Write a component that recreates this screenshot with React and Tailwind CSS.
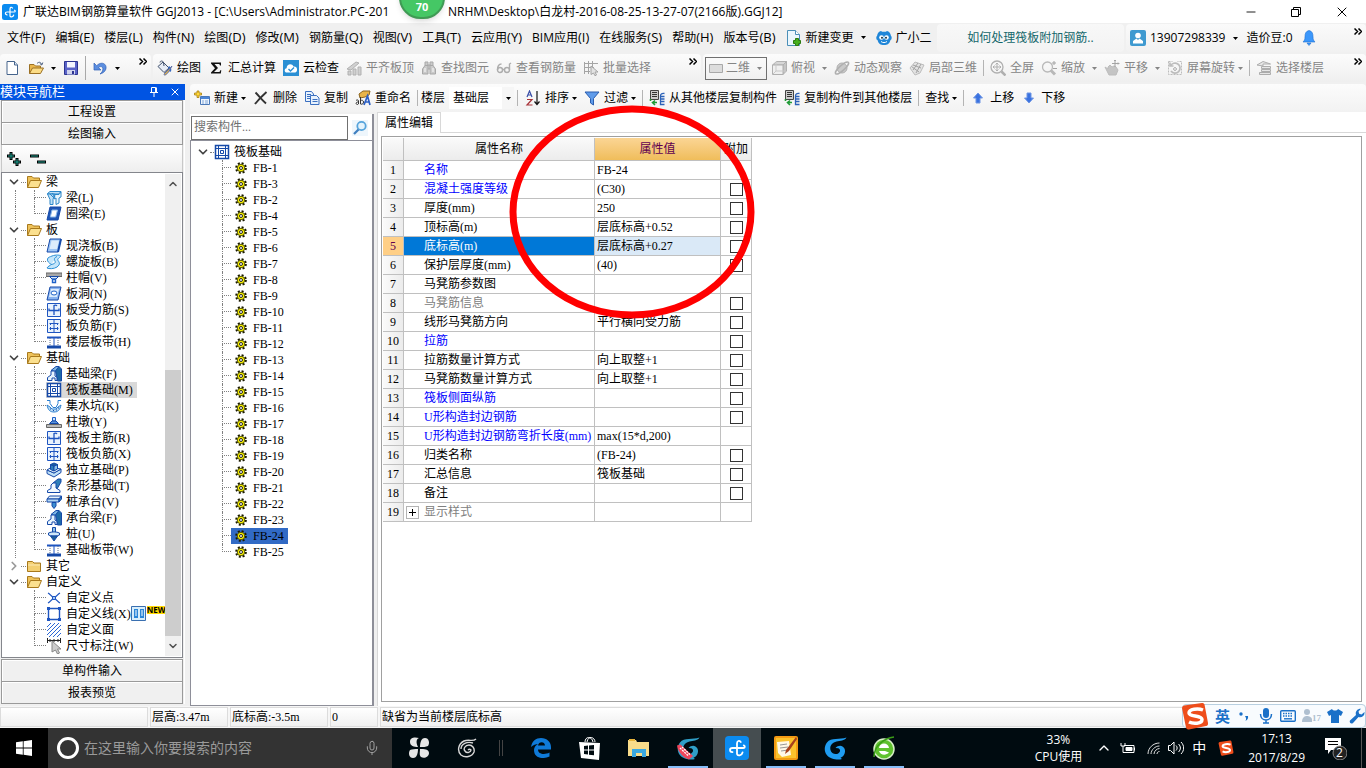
import React, { useState } from "react";
import { ChevronDown, ChevronRight, ChevronUp, Mic, Minus, X } from "lucide-react";

const MENUS = [
  ["文件", "F"],
  ["编辑", "E"],
  ["楼层", "L"],
  ["构件", "N"],
  ["绘图", "D"],
  ["修改", "M"],
  ["钢筋量", "Q"],
  ["视图", "V"],
  ["工具", "T"],
  ["云应用", "Y"],
  ["BIM应用", "I"],
  ["在线服务", "S"],
  ["帮助", "H"],
  ["版本号", "B"],
];

const NAV_TREE = [
  {
    label: "梁",
    items: [
      { label: "梁(L)", icon: "beam" },
      { label: "圈梁(E)", icon: "ring" },
    ],
  },
  {
    label: "板",
    items: [
      { label: "现浇板(B)", icon: "slab" },
      { label: "螺旋板(B)", icon: "spiral" },
      { label: "柱帽(V)", icon: "cap" },
      { label: "板洞(N)", icon: "hole" },
      { label: "板受力筋(S)", icon: "rebar" },
      { label: "板负筋(F)", icon: "negative" },
      { label: "楼层板带(H)", icon: "strip" },
    ],
  },
  {
    label: "基础",
    items: [
      { label: "基础梁(F)", icon: "foundation" },
      { label: "筏板基础(M)", icon: "raft", active: true },
      { label: "集水坑(K)", icon: "pit" },
      { label: "柱墩(Y)", icon: "pier" },
      { label: "筏板主筋(R)", icon: "rebar" },
      { label: "筏板负筋(X)", icon: "negative" },
      { label: "独立基础(P)", icon: "isolated" },
      { label: "条形基础(T)", icon: "stripBase" },
      { label: "桩承台(V)", icon: "pileCap" },
      { label: "承台梁(F)", icon: "foundation" },
      { label: "桩(U)", icon: "pile" },
      { label: "基础板带(W)", icon: "strip" },
    ],
  },
  { label: "其它", closed: true, items: [] },
  {
    label: "自定义",
    items: [
      { label: "自定义点", icon: "point" },
      { label: "自定义线(X)", icon: "line", isNew: true },
      { label: "自定义面", icon: "area" },
      { label: "尺寸标注(W)", icon: "dimension" },
    ],
  },
];

const COMPONENTS = [
  1, 3, 2, 4, 5, 6, 7, 8, 9, 10, 11, 12, 13, 14, 15, 16, 17, 18, 19, 20, 21, 22,
  23, 24, 25,
].map((n) => `FB-${n}`);

const PROPERTIES = [
  { name: "名称", value: "FB-24", tone: "blue" },
  { name: "混凝土强度等级", value: "(C30)", tone: "blue", extra: true },
  { name: "厚度(mm)", value: "250", extra: true },
  { name: "顶标高(m)", value: "层底标高+0.52", extra: true },
  { name: "底标高(m)", value: "层底标高+0.27", extra: true, active: true },
  { name: "保护层厚度(mm)", value: "(40)", extra: true },
  { name: "马凳筋参数图", value: "" },
  { name: "马凳筋信息", value: "", tone: "gray", extra: true },
  { name: "线形马凳筋方向", value: "平行横向受力筋", extra: true },
  { name: "拉筋", value: "", tone: "blue", extra: true },
  { name: "拉筋数量计算方式", value: "向上取整+1", extra: true },
  { name: "马凳筋数量计算方式", value: "向上取整+1", extra: true },
  { name: "筏板侧面纵筋", value: "", tone: "blue", extra: true },
  { name: "U形构造封边钢筋", value: "", tone: "blue", extra: true },
  { name: "U形构造封边钢筋弯折长度(mm)", value: "max(15*d,200)", tone: "blue" },
  { name: "归类名称", value: "(FB-24)", extra: true },
  { name: "汇总信息", value: "筏板基础", extra: true },
  { name: "备注", value: "", extra: true },
  { name: "显示样式", value: "", tone: "gray", group: true },
];

const TONES = {
  blue: "text-[#0000ff]",
  gray: "text-[#808080]",
};

/* ---------- icons ---------- */

const D = "#1549a8";
const L = "#bfe0f7";

const SHAPES = {
  beam: (
    <g stroke="#2a86c8" fill={L}>
      <path d="M1.5 3.5 4 1.5h11L12.5 4H1.5z" />
      <path d="M1.5 4h7L7 9.5v5H4v-5z" />
      <path d="M9 4.5h4L15 2v5l-2 1v5l-3 1.5V8L8 9z" fill="#e8f5fd" />
      <path d="M4 4l4 4M6 3l3 4" />
    </g>
  ),
  ring: (
    <g>
      <path d="M4 1h11l-3 13H1z" fill="#1f56b5" stroke={D} />
      <path d="M6 4h5.5l-1.8 7H4.3z" fill="#fff" stroke="#8ab8ea" />
    </g>
  ),
  slab: (
    <g>
      <path d="M4 1h11l-3 13H1z" fill="#9cc4f5" stroke={D} />
      <path d="M5.500 2.500H13L11 11H3.500z" fill="#dcecfc" />
      <path d="M12 14l3-13" stroke={D} strokeWidth="2" />
    </g>
  ),
  spiral: (
    <path
      d="M6 2c4-1.500 8-1 9 0-2 2-4 3-3 4.500S15 10 11 13c-3 2-8 2-10 1 1-2 3-2 4-3.500C3 8 1 8 1.500 5 2 3 4 3 6 2z M5 10.500C8 10 10 9 9 7S8 4 11 2.500"
      fill="#c5e6fa"
      stroke="#2b8fd6"
    />
  ),
  cap: (
    <g>
      <path d="M0 3h16v3.5H0z" fill="#a8a8a8" stroke="#666" />
      <path d="M3.5 6.5h9L10 9H6z" fill="#d4e7fb" stroke={D} />
      <path d="M6.5 9.500h3v3h-3z" fill="#fff" stroke="#1e62c9" strokeWidth="1.4" />
    </g>
  ),
  hole: (
    <g>
      <path d="M4 1h11l-3 13H1z" fill="#8ab4f0" stroke={D} />
      <path d="M5 3h8l-2 8H3z" fill="#dcecfc" />
      <ellipse cx="8" cy="7" rx="3" ry="2" fill="#fff" stroke="#1e62c9" />
    </g>
  ),
  rebar: (
    <g fill="none" stroke="#1e55c0">
      <path d="M1.5 1.5h13v13h-13z" fill="#eaf3fd" />
      <path d="M8 3v10M11 4c-1-1.500-3-1-3 0M3 6.500v2h10v-2" strokeWidth="1.3" />
    </g>
  ),
  negative: (
    <g fill="none" stroke="#1e55c0">
      <path d="M1.5 1.5h13v13h-13z" fill="#eaf3fd" />
      <path d="M8 2v12M3.5 5.5h9M3.5 10.5h9M4.5 5v2M11.5 5v2M4.5 9v3M11.5 9v3" />
    </g>
  ),
  strip: (
    <g fill="none" stroke="#1e55c0">
      <path d="M1 3.5h14" strokeWidth="2" />
      <path d="M1 13h14" strokeWidth="3" stroke={D} />
      <path d="M8 4v8" />
      <path d="M4 4v8M12 4v8" stroke="#5c6f90" strokeDasharray="1 1" />
    </g>
  ),
  foundation: (
    <g stroke={D}>
      <path d="M9 2l4-1.500L15.500 3v12h-4z" fill="#1e6aa8" />
      <path d="M5 4.500l5-4h3l-4 5z" fill="#7fb7e2" />
      <path d="M1.500 14.500v-3L5 9V5h4v5l2 1.500v3h-2V12H6v2.500z" fill="#e8f4fd" />
    </g>
  ),
  raft: (
    <g fill="none" stroke={D}>
      <path d="M1.5 1.5h13v13h-13z" fill="#fff" strokeWidth="1.5" />
      <path d="M1 4.5h14M1 11.5h14M4.5 1v14M11.5 1v14" />
      <path d="M6.5 6.5h3v3h-3z" />
    </g>
  ),
  pit: (
    <g fill="none" stroke="#2b7fd0">
      <path d="M1 2.5h3v3l3 4h3l2-4v-3h3" />
      <path d="M1 7c1 5 3 7 7 7s6-2 7-7l-3 2-2 2H6L4 9z" fill={L} />
      <path d="M4 11h1M7 12.5h1M10 12h1M12 10h1" stroke={D} />
    </g>
  ),
  pier: (
    <g>
      <path d="M6.5 3.5h3V7h-3z" fill="#cfe5fb" stroke="#1e62c9" />
      <path d="M3.5 9.5L6 7h4l2.5 2.5z" fill="#5a94dc" stroke={D} />
      <path d="M.5 10.5h15v3H.5z" fill="#bbb" stroke="#666" />
    </g>
  ),
  isolated: (
    <g stroke={D}>
      <path d="M1 8l7 3 7-4v3.500L8 15l-7-3.500z" fill="#bfe0f7" />
      <path d="M1 8l4-2.500 10 1.500-7 4z" fill="#eaf5fd" />
      <path d="M4.500 2.500L8 4v5L4.500 7.500z" fill="#2f7fb8" />
      <path d="M8 4l3.500-1.500V7L8 9z" fill="#8fc2e8" />
      <path d="M4.500 2.500L8 1l3.500 1.500L8 4z" fill="#1d5f9a" />
    </g>
  ),
  stripBase: (
    <g stroke={D}>
      <path d="M7 5l5-4h3v3l-4 7z" fill="#2f7fb8" />
      <path d="M1.500 14.500v-2L5 10.500V7l2-2h3v5l4 2.500v2z" fill="#f2f9fe" />
    </g>
  ),
  pileCap: (
    <g stroke={D}>
      <path d="M1 5l2.500-3h12L13 5z" fill="#e4f2fc" />
      <path d="M1 5h12v3H1z" fill="#b4d8f4" />
      <path d="M13 5l2.500-3v3L13 8z" fill="#2f7fb8" />
      <path d="M6 8.500h4V12l-2 2.500L6 12z" fill="#3d8fd0" />
    </g>
  ),
  pile: (
    <g stroke={D}>
      <path d="M6.500 1.500h3v6h-3z" fill="#8fc2e8" />
      <path d="M2.500 7c3-1.500 8-1.500 11 0v2c-2 1.500-9 1.500-11 0z" fill="#cfe8fa" />
      <path d="M4.500 10h7L8 15z" fill="#1d5f9a" />
    </g>
  ),
  point: (
    <g stroke="#1e55c0" fill="none">
      <path d="M2 3c2 1 3 3 6 5s4 4 6 5M14 3c-2 1-3 3-6 5s-4 4-6 5" strokeWidth="1.3" />
      <path d="M6.500 6.500h3v3h-3z" fill="#9cc4f5" />
    </g>
  ),
  line: (
    <g>
      <path d="M2.500 2.500h11v11h-11z" fill="none" stroke="#1e55c0" strokeWidth="1.4" />
      <path d="M1 1h3v3H1zM12 1h3v3h-3zM1 12h3v3H1zM12 12h3v3h-3z" fill="#1e55c0" />
    </g>
  ),
  area: (
    <path
      d="M1 5l4-4M1 9l8-8M1 13l12-12M3 15L15 3M7 15l8-8M11 15l4-4"
      stroke="#2a66d4"
      fill="none"
    />
  ),
  dimension: (
    <g>
      <path d="M1.500 0v5M14.500 0v5M2 2.500h12M4 1v3M8 1v3M12 1v3" stroke="#222" fill="none" />
      <path d="M6 3l9 8h-3.500l2 4-2 1-2-4L6 14z" fill="#ccc" stroke="#888" />
    </g>
  ),
  folder: (
    <g stroke="#a8791c">
      <path d="M1.500 3.500h5L8 5h6.500v8.500h-13z" fill="#f3cf72" />
      <path d="M2 7h12" stroke="#fbe9b4" />
    </g>
  ),
  folderOpen: (
    <g stroke="#a8791c">
      <path d="M1.500 13.500v-11H6L7.500 4h6v3" fill="#eec25a" />
      <path d="M1.500 13.500L4.500 6.500h11l-3 7z" fill="#fbe08f" />
    </g>
  ),
  gear: (
    <g>
      <circle cx="8" cy="8" r="6.3" fill="none" stroke="#1a1a00" strokeWidth="3" strokeDasharray="2.6 2.35" />
      <circle cx="8" cy="8" r="5" fill="#f8f000" stroke="#4a4a00" strokeWidth="1.2" />
      <circle cx="8" cy="8" r="2" fill="#fff" stroke="#222" strokeWidth="1.3" />
    </g>
  ),
  newFile: (
    <g stroke="#46648c">
      <path d="M3 1.500h7.500L13.500 5v9.500H3z" fill="#fff" />
      <path d="M10.500 1.500V5h3" fill="#dbe8f7" />
    </g>
  ),
  openFile: (
    <g>
      <path d="M1.500 13.500v-9H6L7.500 6h5v2" fill="#e9b64c" stroke="#9b7024" />
      <path d="M1.500 13.500L4.500 8h11l-3 5.500z" fill="#fbdc86" stroke="#9b7024" />
      <path d="M9 3.500c2-2 4-1.500 4.500 1M14.800 2.500l-1 2.500-2-1.500" fill="none" stroke="#4a5f80" />
    </g>
  ),
  save: (
    <g>
      <path d="M1.500 1.500h13v13h-13z" fill="#5a63c8" stroke="#2c3490" />
      <path d="M4 2h8v5.500H4z" fill="#f4f6ff" />
      <path d="M4 10h8v4.500H4z" fill="#d0d4ee" />
      <path d="M9 11h2v3H9z" fill="#2c3490" />
    </g>
  ),
  undo: (
    <path
      d="M2 3v7h7L6.500 7.600C9 5.500 11.500 7 10.800 10c-.3 1.500-1.300 2.800-2.800 4 4-1 6.500-4 6-7.300C13.300 2.500 8 2 4.700 5.700z"
      fill="#5b8ee0"
      stroke="#2f5fb4"
      strokeWidth=".7"
    />
  ),
  paint: (
    <g>
      <path d="M6 2l6 6-5 4.500-6-6z" fill="#e6ecf5" stroke="#40506c" />
      <path d="M3 2.500c0-2 3-2 3.500 0L7 6" fill="none" stroke="#40506c" />
      <path d="M11.500 7c2 1 2 3 1.500 4.500" fill="none" stroke="#3568c0" strokeWidth="2" />
      <path d="M15 6l-3.500 6-3 3c-1 .6-2-.5-1-1.500z" fill="#e5b342" stroke="#5b6ea8" />
    </g>
  ),
  sigma: (
    <path d="M3 2.500h10v3h-1l-.7-1.500H6.500L10 8l-4 4h5.500l.8-1.700h1l-.5 3.200H3v-1L7 8.300 3 3.500z" fill="#111" />
  ),
  cloudCheck: (
    <g>
      <path d="M0 0h16v16H0z" fill="#2a8fd4" />
      <path d="M4 12.500c-3 0-3-4-.4-4.300C3.600 4 9 3 10.500 6.500 15 6 15 12 12 12.500z" fill="#fff" />
      <path d="M5.500 9l2 2 3.500-3.500" fill="none" stroke="#2a8fd4" strokeWidth="1.4" />
    </g>
  ),
  align: (
    <g fill="#c4c4c4" stroke="#9a9a9a">
      <path d="M1 9l9-7 3 1-8 7z" />
      <path d="M2 11h3v4H2zM7 9h3v6H7zM12 7h3v8h-3z" />
    </g>
  ),
  binoculars: (
    <g fill="#bdbdbd" stroke="#8f8f8f">
      <path d="M4 2h3v4H4zM9 2h3v4H9zM6.500 5h3v4h-3z" />
      <path d="M1.500 14V9L4 5.500h3V14zM14.500 14V9L12 5.500H9V14z" />
      <path d="M4 8v4M12 8v4" stroke="#fff" />
    </g>
  ),
  glasses: (
    <g fill="none" stroke="#959595" strokeWidth="1.4">
      <circle cx="4" cy="10" r="2.500" />
      <circle cx="11" cy="10" r="2.500" />
      <path d="M6.500 9.500h2M1.500 10c0-4 1-6 4-6M13.500 10V4l1.500-1" />
    </g>
  ),
  batch: (
    <g stroke="#8a8a8a" fill="none">
      <path d="M1.500 2v12M5.500 1v13M9.500 1v8M1 3.500h14M1 7.500h10M1 11.500h6" />
      <path d="M8 6l7 6h-3l1.500 3-1.500.8L10.500 13 8 14.500z" fill="#ddd" />
    </g>
  ),
  plane2d: <path d="M1.500 4.500h13v8h-13z" fill="#dcdcdc" stroke="#a8a8a8" />,
  cube: (
    <g stroke="#999">
      <path d="M1.500 5l4-3.500h10L12 5z" fill="#ccc" />
      <path d="M12 5l3.500-3.500V11L12 14.500z" fill="#b5b5b5" />
      <path d="M1.500 5H12v9.500H1.500z" fill="#eee" />
      <path d="M5 2v9l-3 3M5 11h10" fill="none" stroke="#bbb" />
    </g>
  ),
  planet: (
    <g stroke="#999">
      <circle cx="8" cy="8" r="5" fill="#bcbcbc" />
      <ellipse cx="8" cy="8" rx="8.500" ry="2.500" transform="rotate(-42 8 8)" fill="none" strokeWidth="1.5" />
    </g>
  ),
  local3d: (
    <g stroke="#aaa" fill="#ddd">
      <path d="M1 8l5-6 9 3-4 8-5 2z" />
      <path d="M4 5l8 3M2.500 6.500L10 12M9 3L4 10M12 4L7 13" fill="none" stroke="#888" />
    </g>
  ),
  fit: (
    <g fill="none" stroke="#999">
      <circle cx="7" cy="7" r="6" strokeWidth="1.3" />
      <path d="M7 3v8M3 7h8M5.500 4.500L7 3l1.500 1.500M5.500 9.500L7 11l1.500-1.500M4.500 5.500L3 7l1.500 1.500M9.500 5.500L11 7 9.500 8.500" />
      <path d="M11.500 11.500l4 4" strokeWidth="2.5" />
    </g>
  ),
  zoom: (
    <g fill="none" stroke="#a5a5a5">
      <circle cx="6.500" cy="7" r="5" strokeWidth="1.3" />
      <path d="M10 10.500l4 4" strokeWidth="3" />
      <path d="M13 1v4M11 3h4M12 8.500h4" stroke="#888" />
    </g>
  ),
  pan: (
    <g stroke="#aaa">
      <path d="M1 7l3 2V7l2-2 2 2 2-1 2 1 2 3-2 5H5z" fill="#b5b5b5" />
      <path d="M11 0v7M8 3.500h7M10 1l1-1 1 1M14 2.500l1 1-1 1" fill="none" stroke="#888" />
    </g>
  ),
  rotate: (
    <g fill="none" stroke="#aaa">
      <path d="M1.500 1.500h4M1.500 1.500v13h13v-13h-4" strokeDasharray="2 1" />
      <path d="M4 11a5 5 0 1 0-.5-5M3 2.500V6h3.500" strokeWidth="1.7" />
      <path d="M6 9l2-2 2 2-2 2z" fill="#ccc" />
    </g>
  ),
  floors: (
    <g fill="#e2e2e2" stroke="#959595">
      <path d="M1 5l6-3.500L14.500 4H7v2z" />
      <path d="M5.500 6.500h9v2h-9zM5.500 9.500h9v2h-9zM3.500 12.500h11v2h-11z" />
    </g>
  ),
  addNew: (
    <g>
      <path d="M6.500 6.500h9v8h-9z" fill="#eef5fd" stroke="#4a78b8" />
      <path d="M7 7h8v2H7z" fill="#4b86d8" />
      <path d="M8 11h2M11 11h3M8 13h2M11 13h3" stroke="#7fa5d8" />
      <path d="M3 1h2v2h2.500v2H5v2.500H3V5H.5V3H3z" fill="#ffd83a" stroke="#a87d10" strokeWidth=".8" />
    </g>
  ),
  remove: <path d="M2.500 2.500C6 6 9 10 13 13.500M13.500 2C9 6 6 9 2 14" stroke="#333" strokeWidth="1.9" fill="none" />,
  copy: (
    <g fill="#e8f2fd" stroke="#3a6fc0">
      <path d="M1.500 1.500h6L9.500 4v7.500h-8z" />
      <path d="M3 4.500h4M3 6.500h4M3 8.500h3" />
      <path d="M6.500 5.500h6L15 8v6.500H6.500z" />
      <path d="M8.500 9.500h5M8.500 11.500h5" />
    </g>
  ),
  rename: (
    <g>
      <path d="M4 4l4-3h7l-1 4-4 2-5 1z" fill="#e8b44a" stroke="#8a6420" />
      <path d="M1 10.500c1-1 2.500-.7 2.500.5v3M3.500 12c-3-.3-3 2.500-1 2.500l1-.7M5.500 7v7c2 .8 3-.5 3-2s-1.500-2.300-3-1.300" fill="none" stroke="#333" />
      <path d="M9 15l3.500-9L15 15M10 12h4" fill="none" stroke="#2b5fc4" strokeWidth="1.7" />
    </g>
  ),
  sort: (
    <g fill="none">
      <path d="M2 7l2.500-6L7 7M3 5h3" stroke="#3a4fa8" strokeWidth="1.2" />
      <path d="M2 9.500h5L2 15h5.500" stroke="#a83238" strokeWidth="1.2" />
      <path d="M12 1v13M9.500 11.500L12 14.500l2.500-3" stroke="#111" strokeWidth="1.2" />
    </g>
  ),
  filter: <path d="M1 2h14L9.500 8.500V15l-3-2V8.500z" fill="#5f9bea" stroke="#2a5cae" />,
  copyFloor: (
    <g>
      <path d="M1.500.5h8v9h-8z" fill="#ccc" stroke="#444" />
      <path d="M3 2.500h5M3 4.500h5M3 6.500h5" stroke="#333" />
      <path d="M1.500 9v2M4 12.500h4M6 10.500L3.500 12.500 6 15" stroke="#1f9a35" strokeWidth="1.6" fill="none" />
      <path d="M15.500 3.500c-3-.5-4 .8-4 2.500v8.500h4M12 6.500h3.500M12 9h3.500M12 11.500h3.500" stroke="#2c62b8" fill="none" strokeWidth="1.3" />
    </g>
  ),
  up: <path d="M8 3l4.500 5H10v5H6V8H3.500z" fill="#3a72e0" stroke="#6f96e4" />,
  down: <path d="M8 13L3.500 8H6V3h4v5h2.500z" fill="#3a72e0" stroke="#6f96e4" />,
  changeDoc: (
    <g>
      <path d="M1.500.5h8l4 4v11h-12z" fill="#eaf6fd" stroke="#4a8fb8" />
      <path d="M9.500.5v4h4" fill="#fff" stroke="#4a8fb8" />
      <path d="M9.500 8.500h3v2h2v3h-2v2h-3v-2h-2v-3h2z" fill="#46b01e" stroke="#2b7a10" />
    </g>
  ),
  mascot: (
    <g>
      <path d="M1 6c-1 0-1 4 .5 4 1 4 3 5 6.500 5s5.500-1 6.500-5C16 10 16 6 15 6c-.5-3-2-4.500-4-5-1 .8-2 1-3 .8C7 2 6 1.800 5 1 3 1.500 1.500 3 1 6z" fill="#1f86d8" />
      <circle cx="5.500" cy="7.500" r="2.300" fill="#fff" />
      <circle cx="10.500" cy="7.500" r="2.300" fill="#fff" />
      <circle cx="6" cy="7.700" r="1" fill="#134" />
      <circle cx="10" cy="7.700" r="1" fill="#134" />
      <path d="M5 11.500c2 1.500 4 1.500 6 0" fill="none" stroke="#fff" />
    </g>
  ),
  user: (
    <g>
      <rect width="16" height="16" rx="2" fill="#3f9ad0" />
      <circle cx="8" cy="5.500" r="2.800" fill="#fff" />
      <path d="M3 13.500V11l3.500-2.500L8 10l1.500-1.500L13 11v2.500z" fill="#fff" />
    </g>
  ),
  bell: (
    <g fill="#3b97fb" stroke="#1f6ed0" strokeWidth=".6">
      <path d="M8 .5c-3 .5-4 3-4 6 0 3-.5 4-2 5.500h12c-1.500-1.500-2-2.500-2-5.500 0-3-1-5.500-4-6z" />
      <path d="M6 13h4l-2 2.500z" />
    </g>
  ),
  find: (
    <g fill="none">
      <circle cx="9.500" cy="6" r="4.200" stroke="#56a4dc" strokeWidth="1.8" fill="#e4f3fc" />
      <path d="M6.500 9.500L2 14" stroke="#3f7fc0" strokeWidth="2.3" />
    </g>
  ),
  newTag: (
    <g>
      <path d="M.5.500h14v14H.5z" fill="#d8eefb" stroke="#3a6fb0" />
      <path d="M3 3h4v9H3zM9 3h4v9H9z" fill="#2a86d8" />
      <path d="M4 5h2M4 7h2M4 9h2M10 5h2M10 7h2M10 9h2" stroke="#fff" />
    </g>
  ),
};

function Icon({ name, className = "size-4" }) {
  return (
    <svg viewBox="0 0 16 16" className={`shrink-0 ${className}`} aria-hidden="true">
      {SHAPES[name]}
    </svg>
  );
}

// small triangle used by every drop-down
function Caret({ className = "" }) {
  return (
    <svg viewBox="0 0 5 3" className={`h-[3px] w-[5px] shrink-0 fill-current ${className}`} aria-hidden="true">
      <path d="M0 0h5L2.500 3z" />
    </svg>
  );
}

function GlodonMark({ className = "" }) {
  return (
    <svg viewBox="0 0 16 16" className={`shrink-0 ${className}`} aria-hidden="true">
      <rect width="16" height="16" rx="2.500" fill="#0b8bf0" />
      <path
        d="M10.500 4C9.500 2.700 8 3.200 8 5v7M8 8H5C2.800 8 2.800 10.500 5 10.800M8 8h4.200c1.300 0 1.300-1.500.3-1.800M8 12c.3 1.300 3.200 1.300 3.700-1"
        fill="none"
        stroke="#fff"
        strokeWidth="1.2"
        strokeLinecap="round"
      />
    </svg>
  );
}

function SogouMark({ className = "" }) {
  return (
    <svg viewBox="0 0 28 28" className={`shrink-0 ${className}`} aria-hidden="true">
      <path d="M1 6Q1 4 3 3.500L21 1q2-.3 2.500 1.500L27 21q.4 2.500-2 3L8 27.500q-2.500.5-3-2z" fill="#ee4d1b" />
      <path
        d="M22 8C17 6 8 7 8 11s13 2 13 6.500S12 22 8 20"
        fill="none"
        stroke="#fff"
        strokeWidth="3.5"
      />
    </svg>
  );
}

/* ---------- toolbars ---------- */

function Tool({ icon, label, caret, tight, disabled }) {
  return (
    <button
      className={`flex shrink-0 items-center gap-1 whitespace-nowrap ${
        disabled ? "text-[#858585]" : "text-black"
      }`}
    >
      {icon && <Icon name={icon} className={disabled ? "size-4 opacity-75" : "size-4"} />}
      <span className="flex items-center">
        {label}
        {caret && <Caret className={tight ? "ml-[3px]" : "ml-[7px]"} />}
      </span>
    </button>
  );
}

function Divider() {
  return <span className="-mx-px h-4 w-px shrink-0 bg-[#b4b4b4]" />;
}

function More() {
  return (
    <button aria-label="更多" className="ml-auto self-start pt-1 pr-1">
      <svg viewBox="0 0 8 7" className="h-[7px] w-2" fill="none" stroke="#000" strokeWidth="1.5">
        <path d="M.5.500l3 3-3 3M4.500.500l3 3-3 3" />
      </svg>
    </button>
  );
}

function TitleBar() {
  return (
    <header className="relative flex h-[23px] items-center bg-white text-xs">
      <GlodonMark className="ml-0.5 size-4" />
      <h1 className="ml-[5px] flex whitespace-nowrap">
        <span className="w-[380px] overflow-hidden">
          广联达BIM钢筋算量软件 GGJ2013 - [C:\Users\Administrator.PC-201
        </span>
        <span className="ml-[45px]">NRHM\Desktop\白龙村-2016-08-25-13-27-07(2166版).GGJ12]</span>
      </h1>
      <div className="absolute -top-6 left-[399px] flex h-[43px] w-[46px] items-end justify-center rounded-full border-2 border-[#3f9a54] bg-[#45c765] pb-1 text-[11px] leading-3 font-bold text-white shadow-md">
        70
      </div>
      <div className="ml-auto flex items-center gap-8 pr-4">
        <button aria-label="最小化">
          <Minus className="size-3.5" strokeWidth={1.5} />
        </button>
        <button aria-label="还原">
          <svg viewBox="0 0 12 12" className="size-3" fill="none" stroke="#000">
            <path d="M1.500 3.500h7v7h-7zM3.500 3V1.500h7v7H9" />
          </svg>
        </button>
        <button aria-label="关闭">
          <X className="size-4" strokeWidth={1.5} />
        </button>
      </div>
    </header>
  );
}

function MenuBar() {
  return (
    <nav className="flex h-[30px] items-center bg-[#f0f0f0] text-xs">
      <div className="flex shrink-0 items-center gap-2.5 pl-[7px]">
        {MENUS.map(([label, key]) => (
          <button key={label} className="whitespace-nowrap">
            {label}
            <span className="text-[13px]">({key})</span>
          </button>
        ))}
        <Tool icon="changeDoc" label="新建变更" caret />
        <Tool icon="mascot" label="广小二" />
      </div>
      <div className="ml-auto flex h-7 w-[187px] items-center justify-center rounded bg-linear-to-b from-[#f8f8f8] to-[#f3f3f3]">
        <a href="#help" className="text-[#14676b]">
          如何处理筏板附加钢筋..
        </a>
      </div>
      <div className="ml-0.5 flex h-7 w-[240px] items-center rounded bg-linear-to-b from-[#fafafa] to-[#f1f1f1] pl-1">
        <Icon name="user" />
        <button className="ml-1 flex items-center">
          13907298339
          <Caret className="ml-2" />
        </button>
        <span className="ml-2 whitespace-nowrap">造价豆:0</span>
        <button aria-label="通知" className="ml-2 flex">
          <Icon name="bell" />
        </button>
        <More />
      </div>
    </nav>
  );
}

function MainToolbar() {
  const segment =
    "flex h-7 items-center rounded bg-linear-to-b from-[#fcfcfc] to-[#efefef]";
  return (
    <div className="flex h-[31px] shrink-0 items-start gap-0.5 bg-[#f0f0f0] pt-px text-xs">
      <div className={`${segment} w-[151px] pl-1`}>
        <button aria-label="新建">
          <Icon name="newFile" />
        </button>
        <button className="ml-2 flex items-center" aria-label="打开">
          <Icon name="openFile" />
          <Caret className="ml-[7px]" />
        </button>
        <button className="ml-[7px]" aria-label="保存">
          <Icon name="save" />
        </button>
        <span className="mx-1.5 h-6 w-px bg-[#a8a8a8]" />
        <button className="flex items-center" aria-label="撤销">
          <Icon name="undo" />
          <Caret className="ml-[7px]" />
        </button>
        <More />
      </div>
      <div className={`${segment} w-[548px] gap-[7px] pl-1`}>
        <Tool icon="paint" label="绘图" />
        <Tool icon="sigma" label="汇总计算" />
        <Tool icon="cloudCheck" label="云检查" />
        <Tool icon="align" label="平齐板顶" disabled />
        <Tool icon="binoculars" label="查找图元" disabled />
        <Tool icon="glasses" label="查看钢筋量" disabled />
        <Tool icon="batch" label="批量选择" disabled />
        <More />
      </div>
      <div className={`${segment} flex-1 gap-[7px] pl-0.5`}>
        <div className="relative -mr-[3px] flex h-[23px] w-[62px] items-center border border-[#707070] text-[#858585]">
          <Icon name="plane2d" className="ml-0.5 size-4" />
          <select aria-label="视图模式" className="h-full w-full appearance-none pl-0.5 outline-none">
            <option>二维</option>
          </select>
          <Caret className="pointer-events-none absolute right-1" />
        </div>
        <Tool icon="cube" label="俯视" caret disabled />
        <Tool icon="planet" label="动态观察" disabled />
        <Tool icon="local3d" label="局部三维" disabled />
        <Divider />
        <Tool icon="fit" label="全屏" disabled />
        <Tool icon="zoom" label="缩放" caret disabled />
        <Tool icon="pan" label="平移" caret disabled />
        <Tool icon="rotate" label="屏幕旋转" caret tight disabled />
        <Divider />
        <Tool icon="floors" label="选择楼层" disabled />
        <More />
      </div>
    </div>
  );
}

function ComponentToolbar() {
  return (
    <div className="flex h-7 shrink-0 items-center gap-[7px] rounded bg-linear-to-b from-[#fcfcfc] to-[#f2f2f2] pl-1 text-xs">
      <Tool icon="addNew" label="新建" caret tight />
      <Tool icon="remove" label="删除" />
      <Tool icon="copy" label="复制" />
      <Tool icon="rename" label="重命名" />
      <Divider />
      <label className="-ml-[3px] flex items-center gap-1 whitespace-nowrap">
        楼层
        <span className="relative flex h-[22px] w-[65px] items-center bg-white">
          <select className="h-full w-full appearance-none pl-1 outline-none">
            <option>基础层</option>
          </select>
          <span className="pointer-events-none absolute right-0 flex h-full w-3 items-center justify-center bg-[#f6f6f6]">
            <Caret />
          </span>
        </span>
      </label>
      <span className="-ml-1 h-4 w-px bg-[#b4b4b4]" />
      <Tool icon="sort" label="排序" caret tight />
      <Tool icon="filter" label="过滤" caret tight />
      <Divider />
      <Tool icon="copyFloor" label="从其他楼层复制构件" />
      <Tool icon="copyFloor" label="复制构件到其他楼层" />
      <Divider />
      <Tool label="查找" caret tight />
      <Divider />
      <Tool icon="up" label="上移" />
      <Tool icon="down" label="下移" />
    </div>
  );
}

/* ---------- left navigation ---------- */

function Branch({ last, className = "w-3" }) {
  return (
    <span className={`flex h-4 shrink-0 flex-col ${className}`}>
      <span className="h-2 border-b border-l border-dotted border-[#808080]" />
      {!last && <span className="h-2 border-l border-dotted border-[#808080]" />}
    </span>
  );
}

function NavGroup({ group, lastGroup }) {
  const [open, setOpen] = useState(!group.closed);
  return (
    <li>
      <button onClick={() => setOpen(!open)} className="flex h-4 items-center pl-1">
        {open ? (
          <ChevronDown className="size-3.5 text-[#444]" strokeWidth={3} />
        ) : (
          <ChevronRight className="size-3.5 text-[#999]" strokeWidth={3} />
        )}
        <span className="w-[5px] border-t border-dotted border-[#808080]" />
        <Icon name={open ? "folderOpen" : "folder"} />
        <span className="ml-1">{group.label}</span>
      </button>
      {open && group.items.length > 0 && (
        <ul>
          {group.items.map((item, i) => (
            <li key={item.label} className="flex h-4 items-center pl-3">
              <span
                className={`h-4 w-[19px] shrink-0 border-l border-dotted ${
                  lastGroup ? "border-transparent" : "border-[#808080]"
                }`}
              />
              <Branch last={i === group.items.length - 1} />
              <button
                className={`flex h-4 items-center whitespace-nowrap ${
                  item.active ? "bg-[#d9d9d9] pr-1" : ""
                }`}
              >
                <Icon name={item.icon} />
                <span className="ml-1">{item.label}</span>
              </button>
              {item.isNew && (
                <span className="flex items-start">
                  <Icon name="newTag" />
                  <b className="h-2 bg-[#ffd800] [font-family:'Open_Sans',sans-serif] text-[8px] leading-2">
                    NEW
                  </b>
                </span>
              )}
            </li>
          ))}
        </ul>
      )}
    </li>
  );
}

function NavButton({ children }) {
  return (
    <button className="h-[22px] w-full shrink-0 border-x border-b border-[#9a9a9a] bg-[#f0f0f0] shadow-[inset_1px_1px_0_#fff]">
      {children}
    </button>
  );
}

function ModuleNav() {
  return (
    <aside className="flex w-[185px] shrink-0 flex-col bg-[#f0f0f0] pb-0.5">
      <div className="flex h-4 items-center bg-[#0054e3] pr-1 text-white">
        <h2 className="text-[13px] leading-4">模块导航栏</h2>
        <button aria-label="固定" className="mr-2.5 ml-auto">
          <svg viewBox="0 0 10 10" className="size-2.5" fill="none" stroke="#fff">
            <path d="M2.500 5.500v-5h4v5M6.500.500v5M1 5.500h8M5 6v4M7.500.500v5" />
          </svg>
        </button>
        <button aria-label="关闭">
          <X className="size-3" />
        </button>
      </div>
      <div className="flex min-h-0 flex-1 flex-col border-r border-white pr-px pl-px">
        <div className="flex flex-col border-t border-[#9a9a9a]">
          <NavButton>工程设置</NavButton>
          <NavButton>绘图输入</NavButton>
        </div>
        <div className="flex h-[27px] shrink-0 items-center gap-2 border-x border-[#c8c8c8] bg-linear-to-b from-white to-[#eee] pl-1">
          <button aria-label="全部展开">
            <svg viewBox="0 0 16 16" className="size-4" fill="none">
              <path d="M5 1v8M1 5h8M11 7v8M7 11h8" stroke="#000" strokeWidth="3" />
              <path d="M5 2v6M2 5h6M11 8v6M8 11h6" stroke="#1fa090" />
            </svg>
          </button>
          <button aria-label="全部折叠">
            <svg viewBox="0 0 16 16" className="size-4" fill="none">
              <path d="M0 5h9M7 11h9" stroke="#000" strokeWidth="3" />
              <path d="M1 5h7M8 11h7" stroke="#1fa090" />
            </svg>
          </button>
        </div>
        <div className="flex min-h-0 flex-1 overflow-hidden border border-[#84868c] bg-white p-px">
          <ul className="min-w-0 flex-1 overflow-hidden">
            {NAV_TREE.map((group, i) => (
              <NavGroup key={group.label} group={group} lastGroup={i === NAV_TREE.length - 1} />
            ))}
          </ul>
          <div className="flex w-4 shrink-0 flex-col items-center bg-[#f0f0f0]">
            <ChevronUp className="my-1 size-3 shrink-0 text-[#505050]" strokeWidth={3} />
            <div className="min-h-0 flex-[178]" />
            <div className="min-h-0 w-full flex-[270] bg-[#cdcdcd]" />
            <ChevronDown className="my-1 size-3 shrink-0 text-[#505050]" strokeWidth={3} />
          </div>
        </div>
        <div className="mt-px flex flex-col border-t border-[#9a9a9a]">
          <NavButton>单构件输入</NavButton>
          <NavButton>报表预览</NavButton>
        </div>
      </div>
    </aside>
  );
}

/* ---------- component list ---------- */

function ComponentList({ selected, onSelect }) {
  return (
    <section className="mt-0.5 flex w-[184px] shrink-0 flex-col border-r-2 border-[#8e8f99] bg-white">
      <div className="flex h-[26px] shrink-0 items-center pt-px pl-px">
        <input
          type="text"
          aria-label="搜索构件"
          placeholder="搜索构件..."
          className="h-6 w-[157px] border border-[#707070] px-0.5 outline-none placeholder:text-[#707070]"
        />
        <button aria-label="搜索" className="ml-1 bg-[#eef6fc]">
          <Icon name="find" />
        </button>
      </div>
      <ul className="min-h-0 flex-1 overflow-hidden border border-r-0 border-[#8e8f99] pt-[3px] pl-px">
        <li>
          <button className="flex h-4 items-center pl-1">
            <ChevronDown className="size-3.5 text-[#444]" strokeWidth={3} />
            <span className="w-1 border-t border-dotted border-[#808080]" />
            <Icon name="raft" />
            <span className="ml-1">筏板基础</span>
          </button>
          <ul>
            {COMPONENTS.map((name, i) => (
              <li key={name} className="flex h-4 items-center pl-[30px]">
                <Branch last={i === COMPONENTS.length - 1} className="w-[9px]" />
                <button
                  onClick={() => onSelect(name)}
                  className={`flex h-4 items-center gap-1.5 pr-1 pl-1 ${
                    selected === name ? "bg-[#316ac5]" : ""
                  }`}
                >
                  <Icon name="gear" className="size-3" />
                  {name}
                </button>
              </li>
            ))}
          </ul>
        </li>
      </ul>
    </section>
  );
}

/* ---------- property editor ---------- */

function PropertyTable() {
  const cell = "border-r border-b border-[#c0c0c0]";
  const head = `${cell} bg-linear-to-b from-[#fafafa] to-[#ececec] font-normal`;
  return (
    <div className="relative w-[369px]">
      <table className="w-full table-fixed border-separate border-spacing-0">
        <colgroup>
          <col className="w-[21px]" />
          <col className="w-[191px]" />
          <col className="w-[126px]" />
          <col />
        </colgroup>
        <thead>
          <tr className="h-[23px]">
            <th className={head} aria-label="序号" />
            <th className={head}>属性名称</th>
            <th className={`${cell} bg-linear-to-b from-[#fbd594] to-[#f0bd5a] font-normal text-[#600050]`}>
              属性值
            </th>
            <th className={`${head} whitespace-nowrap`}>附加</th>
          </tr>
        </thead>
        <tbody>
          {PROPERTIES.map((row, i) => (
            <tr key={row.name} className="h-[19px]">
              <th
                scope="row"
                className={`${cell} p-0 leading-4 font-normal ${
                  row.active ? "bg-[#ffcf86] text-[#600050]" : "bg-linear-to-r from-[#fafafa] to-[#ececec]"
                }`}
              >
                {i + 1}
              </th>
              <td
                className={`${cell} p-0 leading-4 whitespace-nowrap ${
                  row.active ? "bg-[#0078d7] text-white" : TONES[row.tone] || ""
                }`}
              >
                <div className="flex items-center">
                  <span className="flex w-5 shrink-0 pl-0.5">
                    {row.group && (
                      <button
                        aria-label="展开"
                        className="flex size-[13px] items-center justify-center border border-[#b4b4b4] text-black"
                      >
                        <svg viewBox="0 0 7 7" className="size-[7px]" stroke="#000">
                          <path d="M3.500 0v7M0 3.500h7" />
                        </svg>
                      </button>
                    )}
                  </span>
                  {row.name}
                </div>
              </td>
              <td className={`${cell} p-0 pl-0.5 leading-4 ${row.active ? "bg-[#dae9f7]" : ""}`}>
                {row.value}
              </td>
              <td className={`${cell} p-0`}>
                {row.extra && (
                  <input
                    type="checkbox"
                    aria-label={`附加 ${row.name}`}
                    className="mx-auto block size-[13px] appearance-none border border-[#333] bg-white checked:bg-[#333]"
                  />
                )}
              </td>
            </tr>
          ))}
        </tbody>
      </table>
      {/* hand-drawn marker over the value column */}
      <svg
        viewBox="0 0 246 214"
        className="pointer-events-none absolute -top-[33px] left-[126px] z-10 h-[214px] w-[246px]"
        aria-hidden="true"
      >
        <ellipse cx="123" cy="107" rx="119" ry="103" fill="none" stroke="#ff0000" strokeWidth="7" />
      </svg>
    </div>
  );
}

function PropertyEditor() {
  return (
    <section className="ml-[3px] flex min-w-0 flex-1 flex-col border-l border-[#d8d8d8] bg-white">
      <div className="flex h-[21px] shrink-0 items-end">
        <button className="h-[21px] border-t border-r border-[#d8d8d8] px-[7px]">属性编辑</button>
        <span className="flex-1 border-b border-[#d8d8d8]" />
      </div>
      <div className="mt-[3px] mr-1 mb-1 ml-[3px] min-h-0 flex-1 border border-[#a0a0a0] pt-px pl-px">
        <PropertyTable />
      </div>
    </section>
  );
}

/* ---------- status bar ---------- */

function StatusCell({ children, className = "" }) {
  return (
    <span
      className={`flex h-5 items-center border border-[#dcdcdc] bg-linear-to-b from-white to-[#f0f0f0] pl-px whitespace-nowrap ${className}`}
    >
      {children}
    </span>
  );
}

function StatusBar() {
  return (
    <footer className="relative flex h-[22px] shrink-0 items-center gap-0.5 bg-[#f6f6f6]">
      <StatusCell className="w-[148px]" />
      <StatusCell className="w-[78px]">层高:3.47m</StatusCell>
      <StatusCell className="w-[98px]">底标高:-3.5m</StatusCell>
      <StatusCell className="w-[48px]">0</StatusCell>
      <StatusCell className="flex-1">缺省为当前楼层底标高</StatusCell>
      <div className="absolute right-0 bottom-0 flex h-6 w-[184px] items-center gap-1.5 rounded border border-[#b8cfe0] bg-[#f8fbfe] text-[#1a70c8]">
        <SogouMark className="-ml-0.5 size-7" />
        <span className="[font-family:'Open_Sans','Noto_Sans_CJK_SC',sans-serif] text-[15px] leading-5 font-bold">
          英
        </span>
        <svg viewBox="0 0 16 16" className="size-4" fill="currentColor">
          <circle cx="5" cy="6" r="1.700" />
          <path d="M9 8h3c.5 2-.5 4-2.500 5 .5-1 .7-2 .5-3z" />
        </svg>
        <svg viewBox="0 0 16 16" className="size-4" fill="none" stroke="currentColor">
          <rect x="5" y="0" width="6" height="10" rx="3" fill="currentColor" stroke="none" />
          <path d="M2.500 6c0 8 11 8 11 0M8 12v3.500M5 15h6" strokeWidth="1.5" />
        </svg>
        <svg viewBox="0 0 16 16" className="size-4" fill="none" stroke="currentColor">
          <rect x=".7" y="2.700" width="14.600" height="10.600" rx="1" strokeWidth="1.4" />
          <path d="M3 5.500h10M3 8h10" strokeWidth="1.5" strokeDasharray="1.5 1" />
          <path d="M4 10.800h8" strokeWidth="1.4" />
        </svg>
        <span className="flex items-end text-[9px] leading-3 font-bold text-[#aebfd0]">
          <svg viewBox="0 0 10 16" className="h-4 w-2.5" fill="currentColor">
            <circle cx="5" cy="4" r="3" />
            <path d="M0 14c0-5 3-6 5-6s5 1 5 4v2z" />
          </svg>
          17
        </span>
        <svg viewBox="0 0 16 16" className="size-4" fill="currentColor">
          <path d="M5 1c1 2 5 2 6 0l5 3-2 4-2-1v8H4V7L2 8 0 4z" />
        </svg>
        <svg viewBox="0 0 16 16" className="size-4" fill="currentColor">
          <path d="M15.500 4c.5 4-3 6-6 5L4 15c-2 1.500-4-.5-3-2.500L7 7C6 4 8 .5 12 .7L9.500 3.500l.7 2.300 2.300.7z" />
        </svg>
      </div>
    </footer>
  );
}

/* ---------- windows taskbar ---------- */

function SwirlG({ className, color, tail }) {
  return (
    <svg viewBox="0 0 24 24" className={className} aria-hidden="true">
      <path
        d="M23.500 1.500C21.500 5 17 4.500 13.500 5.500 9 6.800 6.500 10 7.500 14c.8 3.500 5 5.200 8 3.200 2.200-1.500 2-4.200-.2-5L12.500 12c1.800-2 5-2.800 7-1.500C24 13.500 22 20 17.500 21.800L19 23c-3 1-7 .5-10-.5C2 20.500-.5 12.500 4 6.500 8 1.200 17 4 23.500 1.500z"
        fill={color}
      />
      {tail && <path d="M1 9.500l3.500-1L17 20l-4 3.500C7 21.500 2 16 1 9.500z" fill="#f0455a" />}
      {tail && <path d="M4 12l8.500 8M6 11l8 7.500" stroke="#fff" strokeWidth="1.3" strokeDasharray="2 1" />}
    </svg>
  );
}

function TaskButton({ label, running, active, children }) {
  return (
    <button
      aria-label={label}
      className={`relative flex h-10 w-12 shrink-0 items-center justify-center ${active ? "bg-[#454d50]" : ""}`}
    >
      {children}
      {running && <span className="absolute inset-x-1 bottom-0 h-0.5 bg-[#86bdf8]" />}
    </button>
  );
}

function Taskbar() {
  return (
    <div className="flex h-10 shrink-0 items-center bg-[#000b10] [font-family:'Open_Sans','Noto_Sans_CJK_SC',sans-serif] text-xs text-white">
      <button aria-label="开始" className="flex h-10 w-12 shrink-0 items-center justify-center bg-black">
        <svg viewBox="0 0 16 16" className="size-4" fill="#fff">
          <path d="M0 2.300L6.800 1.300v6.300H0zM7.600 1.200L16 0v7.600H7.600zM0 8.400h6.800v6.300L0 13.700zM7.600 8.400H16V16l-8.400-1.200z" />
        </svg>
      </button>
      <label className="flex h-10 w-[344px] shrink-0 items-center bg-[#333] pl-[9px]">
        <span className="size-[22px] shrink-0 rounded-full border-[3px] border-white" />
        <input
          type="text"
          aria-label="搜索"
          placeholder="在这里输入你要搜索的内容"
          className="ml-[5px] w-full min-w-0 text-sm outline-none placeholder:text-[#9a9a9a]"
        />
        <Mic className="mr-3 size-4 shrink-0 text-[#a0a0a0]" strokeWidth={1.5} />
      </label>
      <div className="ml-[3px] flex">
        <TaskButton label="风扇">
          <svg viewBox="0 0 22 22" className="size-[22px]" fill="#e6e6e6">
            <path d="M10 10C8 6 8 2 11 1c-4-1-9-1-9 4 0 4 4 5 8 5z" />
            <path d="M12 10c0-4 1-9 5-9s5 5 3 8c-2 1-5 1-8 1z" />
            <path d="M12 12c4 0 9 0 9 4s-5 6-8 4c-2-2-1-5-1-8z" />
            <path d="M10 12c0 4-1 9-5 9s-5-5-3-8c2-1 5-1 8-1z" />
          </svg>
        </TaskButton>
        <TaskButton label="浏览器">
          <svg viewBox="0 0 20 20" className="size-5" fill="none" stroke="#d8d8d8" strokeWidth="1.4">
            <path d="M19 1c-3 3-7 0-12 2C1 6 0 13 4 17c4 3 11 2 13-3 1-4-2-7-5-7-4 0-6 4-4 6 2 3 6 1 6-1-1-1-2-1-3 0M16 5C10 3 4 6 4 11" />
          </svg>
        </TaskButton>
      </div>
      <span className="mr-3.5 ml-2 h-4 w-1 border-x border-[#444]" />
      <div className="flex gap-px">
        <TaskButton label="Edge">
          <svg viewBox="0 0 20 20" className="size-5" fill="#0f7ad8">
            <path d="M0 9C1 3 5 0 10 0c6 0 10 4 10 9v2.500H7c0 5 7 5.500 11.500 3v4C12 21.500 3 20.500 3 12c0-3 2-5 4-6-2 0-5 1-7 3zm7-1.500h7C14 3 7.500 3 7 7.500z" />
          </svg>
        </TaskButton>
        <TaskButton label="应用商店">
          <svg viewBox="0 0 22 24" className="h-6 w-[22px]">
            <path d="M6 6c0-6 7-6 8 0M8 6c1-7 8-5 8 0" fill="none" stroke="#fff" />
            <path d="M0 6l21 1-1 17-18-2z" fill="#fff" />
            <path d="M5 10l4-.4v4H5zM10 9.500l5-.5v4.600h-5zM5 14.500h4v4l-4-.4zM10 14.500h5v4.800l-5-.6z" fill="#000b10" />
          </svg>
        </TaskButton>
        <TaskButton label="文件资源管理器">
          <svg viewBox="0 0 22 20" className="h-5 w-[22px]">
            <path d="M0 2h8l1 2h12v14H0z" fill="#f8dc8a" />
            <path d="M1 1h6v2H1z" fill="#e8b53c" />
            <path d="M4 19v-8h14v8h-4v-4H8v4z" fill="#3aa8e0" />
          </svg>
        </TaskButton>
        <TaskButton label="广联达" running>
          <SwirlG className="size-6" color="#2f9fc8" tail />
        </TaskButton>
        <TaskButton label="钢筋算量" active>
          <GlodonMark className="size-6" />
        </TaskButton>
        <TaskButton label="便笺" running>
          <svg viewBox="0 0 24 24" className="size-6">
            <rect width="24" height="24" rx="2" fill="#f39a14" />
            <path d="M2 2h20v20H2z" fill="#fbc22c" />
            <path d="M3 6l12-1 2 14-9 2-4-4z" fill="#fff8e8" />
            <path d="M6 9l7-1M6 12l8-1M7 15l7-1" stroke="#999" />
            <path d="M22 1L12 14l-1 4 4-3 8-12z" fill="#a8401c" />
          </svg>
        </TaskButton>
        <TaskButton label="浏览器G" running>
          <SwirlG className="size-6" color="#1f9cf0" />
        </TaskButton>
        <TaskButton label="安全浏览器" running>
          <svg viewBox="0 0 24 24" className="size-6">
            <circle cx="12" cy="13" r="10" fill="#5fc22e" stroke="#d8f0c8" strokeWidth="1.5" />
            <path d="M7 12h10c-.5-6-9.500-6-10 0zm0 3c1 4 7 5 10 1.500L13 15z" fill="#fff" />
            <path d="M2 21C2 10 12 2 22 1" fill="none" stroke="#3a9c18" strokeWidth="1.5" />
          </svg>
        </TaskButton>
      </div>
      <div className="ml-auto flex h-full items-center">
        <div className="text-center leading-[17px] whitespace-nowrap">
          33%
          <br />
          CPU使用
        </div>
        <ChevronUp className="ml-3.5 size-4" strokeWidth={2} />
        <svg viewBox="0 0 16 12" className="ml-2 h-3 w-4" fill="none" stroke="#fff">
          <path d="M4 3.500h10v7H3V8M14.500 5.500v3" />
          <path d="M6 5.500h6v3H6z" fill="#fff" />
          <path d="M1 1v3h4V1M3 4v4" />
        </svg>
        <svg viewBox="0 0 16 16" className="ml-2.5 size-4" fill="none" stroke="#ddd">
          <path d="M2 14C2 8 7 3 13.500 3M5 14c0-4 4-8 8.500-8M8 14c0-3 3-5.500 5.500-5.500M11 14c0-1.500 1-2.500 2.500-2.500" />
        </svg>
        <svg viewBox="0 0 16 16" className="ml-1.5 size-4" fill="none" stroke="#fff">
          <path d="M.5 5.500h2L6 2v12l-3.500-3.500h-2zM8 5.500c1.500 1.500 1.500 3.500 0 5M10.500 4c2.500 2.500 2.500 5.500 0 8M13 2c3.500 3.500 3.500 8.500 0 12" />
        </svg>
        <span className="ml-2 text-sm">中</span>
        <SogouMark className="ml-3 size-4" />
        <div className="ml-3.5 text-center leading-[19px]">
          17:13
          <br />
          2017/8/29
        </div>
        <button aria-label="通知" className="relative ml-[18px] flex h-10 w-8 items-center">
          <svg viewBox="0 0 24 24" className="size-6">
            <path d="M2 2h16v12H8l-3 4v-4H2z" fill="#fff" />
            <path d="M5 5.500h10M5 8.500h10" stroke="#000" />
            <circle cx="17" cy="17" r="7" fill="#222" stroke="#888" />
          </svg>
          <span className="absolute top-[17px] left-[13px] text-xs leading-4">2</span>
        </button>
        <span className="ml-1.5 h-full w-[5px] border-l border-[#555]" />
      </div>
    </div>
  );
}

export default function App() {
  const [selected, setSelected] = useState("FB-24");

  return (
    <div className="flex h-screen min-h-[768px] flex-col overflow-hidden bg-[#f0f0f0] text-xs text-black">
      <div className="shrink-0 [font-family:'Open_Sans','Noto_Sans_CJK_SC',sans-serif]">
        <TitleBar />
        <MenuBar />
        <MainToolbar />
      </div>
      <div className="flex min-h-0 flex-1 [font-family:'Liberation_Serif','Noto_Sans_CJK_SC',serif]">
        <ModuleNav />
        <div className="ml-[5px] flex min-w-0 flex-1 flex-col">
          <div className="[font-family:'Open_Sans','Noto_Sans_CJK_SC',sans-serif]">
            <ComponentToolbar />
          </div>
          <div className="flex min-h-0 flex-1">
            <ComponentList selected={selected} onSelect={setSelected} />
            <PropertyEditor />
          </div>
        </div>
      </div>
      <div className="[font-family:'Liberation_Serif','Noto_Sans_CJK_SC',serif]">
        <StatusBar />
      </div>
      <Taskbar />
    </div>
  );
}
